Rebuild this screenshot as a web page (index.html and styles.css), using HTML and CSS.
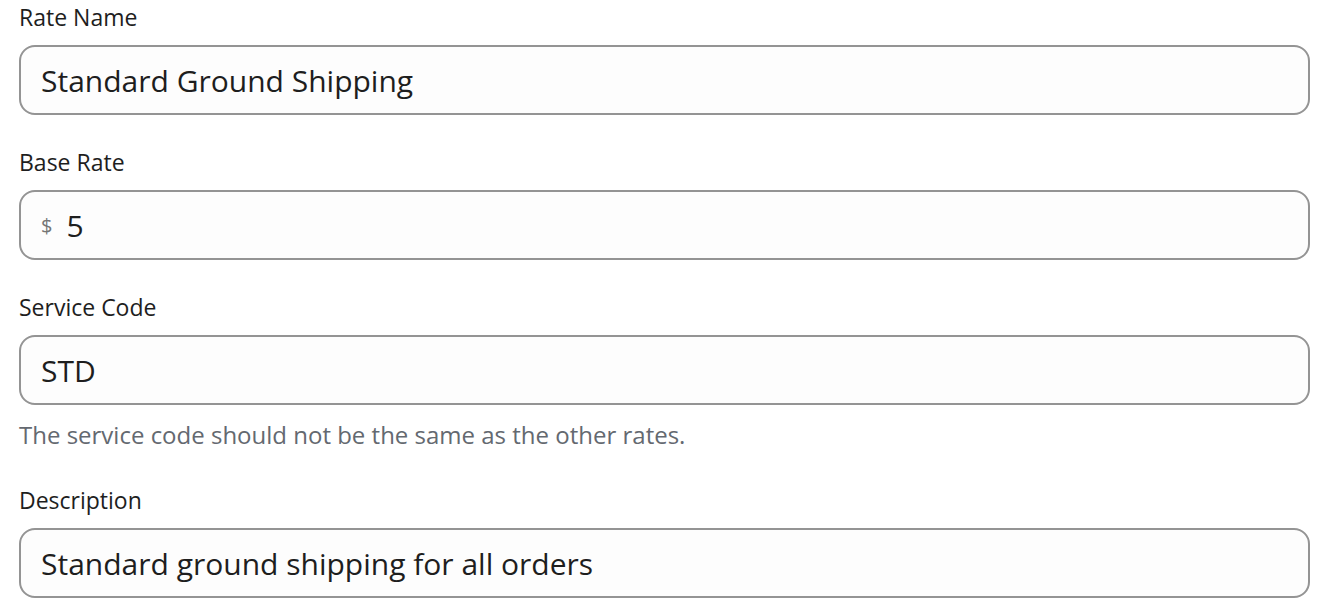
FILE: index.html
```html
<!DOCTYPE html>
<html lang="en">
<head>
  <meta charset="UTF-8">
  <meta name="viewport" content="width=device-width, initial-scale=1">
  <title>Shipping Rate</title>
  <link rel="stylesheet" href="styles.css">
</head>
<body>
  <div class="rate-form">
    <div class="field">
      <label for="rate_name">Rate Name</label>
      <div class="input-box">
        <input id="rate_name" type="text" value="Standard Ground Shipping">
      </div>
    </div>
    <div class="field">
      <label for="base_rate">Base Rate</label>
      <div class="input-box">
        <span class="prefix">$</span>
        <input id="base_rate" type="text" value="5">
      </div>
    </div>
    <div class="field">
      <label for="service_code">Service Code</label>
      <div class="input-box">
        <input id="service_code" type="text" value="STD">
      </div>
      <p class="help">The service code should not be the same as the other rates.</p>
    </div>
    <div class="field">
      <label for="description">Description</label>
      <div class="input-box">
        <input id="description" type="text" value="Standard ground shipping for all orders">
      </div>
    </div>
  </div>
</body>
</html>
```

FILE: styles.css
```css
body {
  margin: 0;
  background-color: #fff;
  font-family: "Open Sans", "Noto Sans", Arial, sans-serif;
  color: #1e1e1e;
}
.rate-form {
  padding: 3px 18px 0 19px;
}
.field {
  margin-bottom: 33px;
}
.field label {
  display: block;
  font-size: 23px;
  line-height: 28px;
  margin-bottom: 14px;
  color: #1e1e1e;
}
.input-box {
  display: flex;
  align-items: center;
  height: 70px;
  box-sizing: border-box;
  border: 2px solid #949494;
  border-radius: 16px;
  background-color: #fdfdfd;
  padding: 0 20px;
}
.input-box input {
  flex: 1;
  border: none;
  outline: none;
  background: transparent;
  padding: 0;
  font-family: inherit;
  font-size: 30px;
  color: #1e1e1e;
}
.prefix {
  font-size: 20px;
  color: #757575;
  margin-right: 14px;
}
/* helper text under a field */
.help {
  margin: 14px 0 0;
  padding-bottom: 2px;
  font-size: 24px;
  line-height: 32px;
  color: #646970;
}
```
